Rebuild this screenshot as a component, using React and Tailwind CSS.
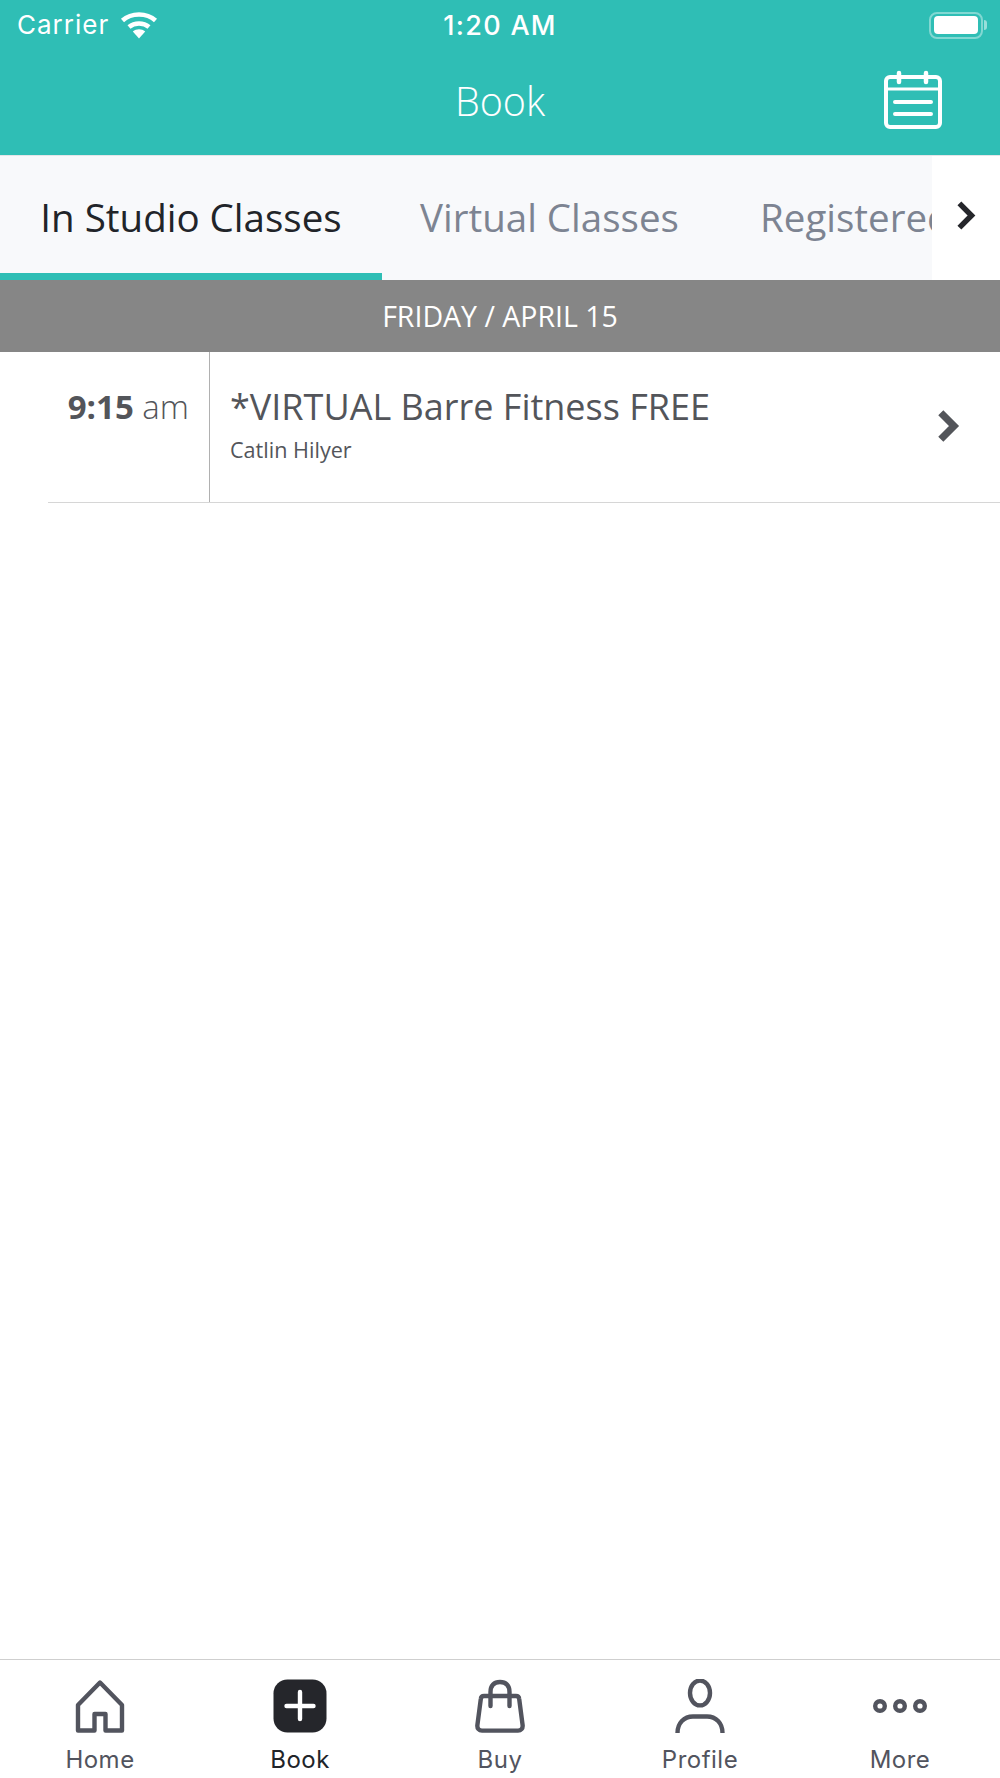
import React from "react";

const OPEN = "font-['Open_Sans',sans-serif]";
const INTER = "font-['Inter',sans-serif]";

function Wifi() {
  return (
    <svg width="38" height="28" viewBox="0 0 38 28" fill="none">
      <path d="M2.5 9.5C11.5 1.5 26.5 1.5 35.5 9.5" stroke="white" strokeWidth="4.6" />
      <path d="M9 16C14.5 11.4 23.5 11.4 29 16" stroke="white" strokeWidth="4.6" />
      <path d="M12.8 20.6C16.4 17.4 21.6 17.4 25.2 20.6L19 27.5Z" fill="white" />
    </svg>
  );
}

function Battery() {
  return (
    <div className="flex items-center gap-[1px]">
      <div className="flex h-[27px] w-[54px] items-center justify-center rounded-[8px] border-2 border-white/40">
        <div className="h-[18px] w-[44px] rounded-[4px] bg-white" />
      </div>
      <div className="h-[10px] w-[3px] rounded-r-full bg-white/50" />
    </div>
  );
}

function CalendarIcon() {
  return (
    <svg width="60" height="60" viewBox="0 0 60 60" fill="none" stroke="white" strokeLinecap="round">
      <rect x="3" y="7" width="54" height="50" rx="4" strokeWidth="4" />
      <path d="M3 19H57" strokeWidth="3" />
      <path d="M16 3V12M43 3V12" strokeWidth="4.5" />
      <path d="M12 32H48M12 44H48" strokeWidth="4" />
    </svg>
  );
}

function Chevron({ color, stroke, w, h }) {
  return (
    <svg width={w} height={h} viewBox="0 0 20 30" fill="none">
      <path d="M4 4L15 15L4 26" stroke={color} strokeWidth={stroke} strokeLinejoin="miter" />
    </svg>
  );
}

function TabIcon({ name }) {
  const c = "#52545e";
  if (name === "home") {
    return (
      <svg width="54" height="54" viewBox="0 0 54 54" fill="none" stroke={c} strokeWidth="4.4" strokeLinejoin="round">
        <path d="M27 3.5L49 26V51.5H32.5V35H21.5V51.5H5V26Z" />
      </svg>
    );
  }
  if (name === "book") {
    return (
      <svg width="54" height="54" viewBox="0 0 54 54" fill="none">
        <rect x="0.5" y="0.5" width="53" height="53" rx="14" fill="#25262b" />
        <path d="M27 13V40M13.5 27H40.5" stroke="white" strokeWidth="4.4" strokeLinecap="round" />
      </svg>
    );
  }
  if (name === "buy") {
    return (
      <svg width="54" height="54" viewBox="0 0 54 54" fill="none" stroke={c} strokeWidth="4.4" strokeLinecap="round" strokeLinejoin="round">
        <path d="M11 17H43C45 17 46 18 46.2 20L49.6 46C50 49.6 48 51.6 45 51.6H9C6 51.6 4 49.6 4.4 46L7.8 20C8 18 9 17 11 17Z" />
        <path d="M17.5 27V13C17.5 6.5 21 3 27 3C33 3 36.5 6.5 36.5 13V27" />
      </svg>
    );
  }
  if (name === "profile") {
    return (
      <svg width="54" height="54" viewBox="0 0 54 54" fill="none" stroke={c} strokeWidth="4.4">
        <ellipse cx="27" cy="14" rx="10" ry="12.4" />
        <path d="M4.5 54C4.5 44 11 37.5 20 37.5H34C43 37.5 49.5 44 49.5 54" />
      </svg>
    );
  }
  return (
    <svg width="54" height="54" viewBox="0 0 54 54" fill="none" stroke={c} strokeWidth="4.4">
      <circle cx="7" cy="27" r="4.8" />
      <circle cx="27" cy="27" r="4.8" />
      <circle cx="47" cy="27" r="4.8" />
    </svg>
  );
}

const tabs = [
  { id: "home", label: "Home" },
  { id: "book", label: "Book", active: true },
  { id: "buy", label: "Buy" },
  { id: "profile", label: "Profile" },
  { id: "more", label: "More" },
];

export default function App() {
  return (
    <div className="flex h-[1778px] w-[1000px] flex-col overflow-hidden bg-white">
      {/* status bar + nav */}
      <header className="h-[155px] shrink-0 bg-[#2fbeb5] text-white">
        <div className={`relative flex h-[50px] items-center justify-between pl-[17px] pr-[13px] ${INTER}`}>
          <div className="flex items-center gap-[11px]">
            <span className="text-[26px] leading-none tracking-[1px]">Carrier</span>
            <Wifi />
          </div>
          <span className="absolute left-0 right-0 text-center text-[27px] font-medium leading-none tracking-[1.3px]">1:20 AM</span>
          <Battery />
        </div>
        <div className="relative flex h-[105px] items-center justify-center pb-[1px]">
          <span className={`text-[39.5px] font-light leading-none ${OPEN}`}>Book</span>
          <div className="absolute right-[57px] top-[20px]">
            <CalendarIcon />
          </div>
        </div>
      </header>

      {/* tabs */}
      <div className="flex h-[125px] shrink-0 border-t border-[#e4e5e8]">
        <div className={`flex w-[932px] overflow-hidden bg-[#f8f9fb] text-[38.5px] ${OPEN}`}>
          <div className="flex w-[382px] shrink-0 items-center justify-center whitespace-nowrap border-b-[7px] border-[#2fbeb5] pt-[7px] text-[#212429]">
            In Studio Classes
          </div>
          <div className="flex w-[378px] shrink-0 items-center pl-[38px] whitespace-nowrap text-[#7d8492]">
            Virtual Classes
          </div>
          <div className="flex shrink-0 items-center whitespace-nowrap text-[#7d8492]">
            Registered
          </div>
        </div>
        <div className="flex flex-1 items-center justify-center pb-[6px]">
          <Chevron color="#25262b" stroke="5" w="22" h="33" />
        </div>
      </div>

      {/* date bar */}
      <div className={`flex h-[72px] shrink-0 items-center justify-center bg-[#868686] text-[28.5px] text-white ${OPEN}`}>
        FRIDAY / APRIL 15
      </div>

      {/* class row */}
      <div className={`ml-[48px] flex h-[151px] shrink-0 border-b border-[#d6d6d6] ${OPEN}`}>
        <div className="w-[162px] shrink-0 border-r border-[#b0b0b0] pr-[20px] pt-[38px] text-right text-[33px] leading-none text-[#53555a]">
          <span className="font-bold">9:15</span> <span className="font-light">am</span>
        </div>
        <div className="flex-1 pl-[20px] pt-[37px] text-[#53555a]">
          <div className="text-[36px] leading-none">*VIRTUAL Barre Fitness FREE</div>
          <div className="mt-[14px] text-[21.6px] leading-none">Catlin Hilyer</div>
        </div>
        <div className="flex w-[64px] shrink-0 items-start pt-[56px]">
          <Chevron color="#53555a" stroke="6" w="24" h="36" />
        </div>
      </div>

      <div className="flex-1" />

      {/* bottom tab bar */}
      <nav className={`grid h-[119px] shrink-0 grid-cols-5 border-t border-[#cfcfcf] pt-[19px] ${INTER}`}>
        {tabs.map((t) => (
          <div key={t.id} className="flex flex-col items-center">
            <TabIcon name={t.id} />
            <span className={`mt-[15px] text-[24px] leading-none tracking-[0.5px] ${t.active ? "text-[#212429]" : "text-[#52545e]"}`}>
              {t.label}
            </span>
          </div>
        ))}
      </nav>
    </div>
  );
}
